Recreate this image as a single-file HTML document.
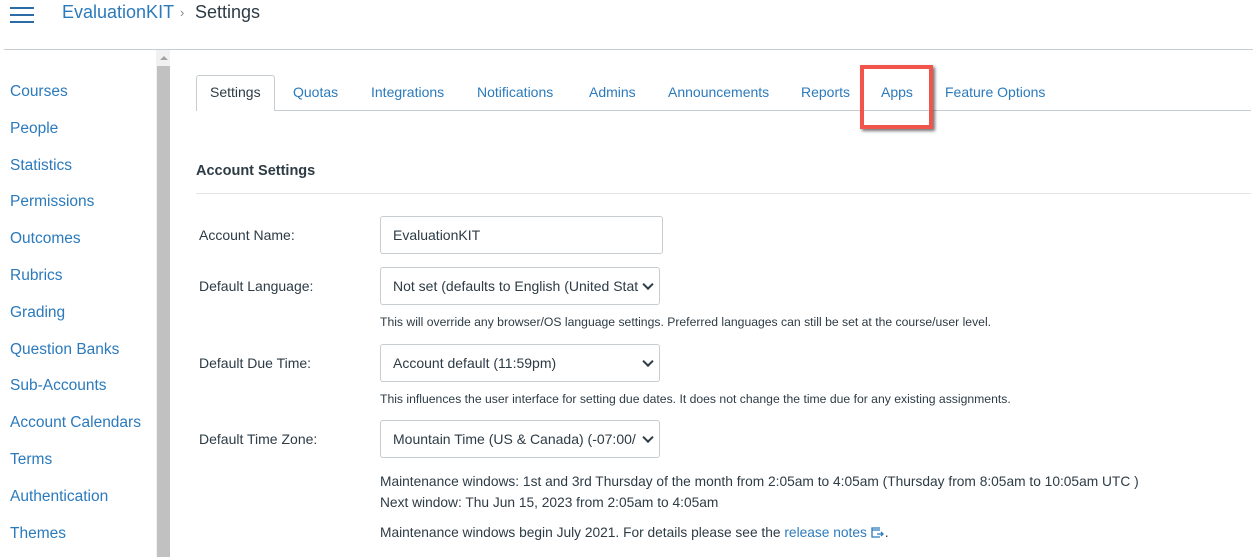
<!DOCTYPE html>
<html><head><meta charset="utf-8"><style>
*{margin:0;padding:0;box-sizing:border-box}
body{width:1253px;height:557px;overflow:hidden;background:#fff;font-family:"Liberation Sans",sans-serif;color:#2d3b45;position:relative}
.a{position:absolute;white-space:nowrap}
.bl{color:#2b7abc}
.nav{font-size:15.5px;color:#2b7abc;left:10px}
.tab{font-size:14px;color:#2b7abc;top:84px}
.lbl{font-size:14px;left:199px}
.box{position:absolute;border:1px solid #c7cdd1;border-radius:3px;background:#fff;font-size:14px;padding-left:12px;display:flex;align-items:center}
.sel::after{content:"";position:absolute;right:7px;top:50%;width:6px;height:6px;border-right:2px solid #2d3b45;border-bottom:2px solid #2d3b45;transform:translateY(-70%) rotate(45deg)}
.hint{font-size:12.2px;left:380px}
.hb{position:absolute;left:10px;width:24px;height:2px;background:#2b6ca8}
</style></head><body>
<div class="hb" style="top:7px"></div><div class="hb" style="top:14px"></div><div class="hb" style="top:21px"></div>
<div class="a bl" style="left:62px;top:2px;font-size:18px">EvaluationKIT</div>
<div class="a" style="left:180px;top:5px;font-size:13px;color:#888">›</div>
<div class="a" style="left:195px;top:2px;font-size:18px;color:#2d3b45">Settings</div>
<div class="a" style="left:4px;top:49px;width:1249px;height:1px;background:#c7cdd1"></div>
<div class="a" style="left:156px;top:50px;width:14px;height:507px;background:#f1f1f1"></div>
<div class="a" style="left:157px;top:66px;width:13px;height:491px;background:#c1c1c1"></div>
<div class="a" style="left:160px;top:56px;width:0;height:0;border-left:4px solid transparent;border-right:4px solid transparent;border-bottom:4px solid #a3a3a3"></div>
<div class="a nav" style="top:83px">Courses</div>
<div class="a nav" style="top:120px">People</div>
<div class="a nav" style="top:157px">Statistics</div>
<div class="a nav" style="top:193px">Permissions</div>
<div class="a nav" style="top:230px">Outcomes</div>
<div class="a nav" style="top:267px">Rubrics</div>
<div class="a nav" style="top:304px">Grading</div>
<div class="a nav" style="top:341px">Question Banks</div>
<div class="a nav" style="top:377px">Sub-Accounts</div>
<div class="a nav" style="top:414px">Account Calendars</div>
<div class="a nav" style="top:451px">Terms</div>
<div class="a nav" style="top:488px">Authentication</div>
<div class="a nav" style="top:525px">Themes</div>
<div class="a" style="left:196px;top:110px;width:1055px;height:1px;background:#c7cdd1"></div>
<div class="a" style="left:196px;top:75px;width:79px;height:36px;border:1px solid #c7cdd1;border-bottom:none;border-radius:3px 3px 0 0;background:#fff"></div>
<div class="a tab" style="left:210px;color:#2d3b45">Settings</div>
<div class="a tab" style="left:293px">Quotas</div>
<div class="a tab" style="left:371px">Integrations</div>
<div class="a tab" style="left:477px">Notifications</div>
<div class="a tab" style="left:589px">Admins</div>
<div class="a tab" style="left:668px">Announcements</div>
<div class="a tab" style="left:801px">Reports</div>
<div class="a tab" style="left:881px">Apps</div>
<div class="a tab" style="left:945px">Feature Options</div>
<div class="a" style="left:860px;top:65px;width:73px;height:64px;border:4px solid #f0544a;box-shadow:2px 2px 3px rgba(0,0,0,.55)"></div>
<div class="a" style="left:196px;top:163px;font-size:14.5px;font-weight:bold">Account Settings</div>
<div class="a" style="left:196px;top:193px;width:1055px;height:1px;background:#e2e5e7"></div>
<div class="a lbl" style="top:227px">Account Name:</div>
<div class="box" style="left:380px;top:216px;width:283px;height:38px">EvaluationKIT</div>
<div class="a lbl" style="top:278px">Default Language:</div>
<div class="box sel" style="left:380px;top:267px;width:280px;height:38px">Not set (defaults to English (United Stat</div>
<div class="a hint" style="top:315px">This will override any browser/OS language settings. Preferred languages can still be set at the course/user level.</div>
<div class="a lbl" style="top:355px">Default Due Time:</div>
<div class="box sel" style="left:380px;top:344px;width:280px;height:38px">Account default (11:59pm)</div>
<div class="a hint" style="top:392px">This influences the user interface for setting due dates. It does not change the time due for any existing assignments.</div>
<div class="a lbl" style="top:431px">Default Time Zone:</div>
<div class="box sel" style="left:380px;top:420px;width:280px;height:38px">Mountain Time (US &amp; Canada) (-07:00/</div>
<div class="a" style="left:380px;top:474px;font-size:13.75px">Maintenance windows: 1st and 3rd Thursday of the month from 2:05am to 4:05am (Thursday from 8:05am to 10:05am UTC )</div>
<div class="a" style="left:380px;top:495px;font-size:13.75px">Next window: Thu Jun 15, 2023 from 2:05am to 4:05am</div>
<div class="a" style="left:380px;top:525px;font-size:13.75px">Maintenance windows begin July 2021. For details please see the <span class="bl">release notes</span> <svg width="14" height="11" viewBox="0 0 14 11" style="vertical-align:-1px"><path d="M9 1H1v9h8M1 3h8M6 7h6M10 5l2 2-2 2" fill="none" stroke="#2b7abc" stroke-width="1.3"/></svg>.</div>
</body></html>
